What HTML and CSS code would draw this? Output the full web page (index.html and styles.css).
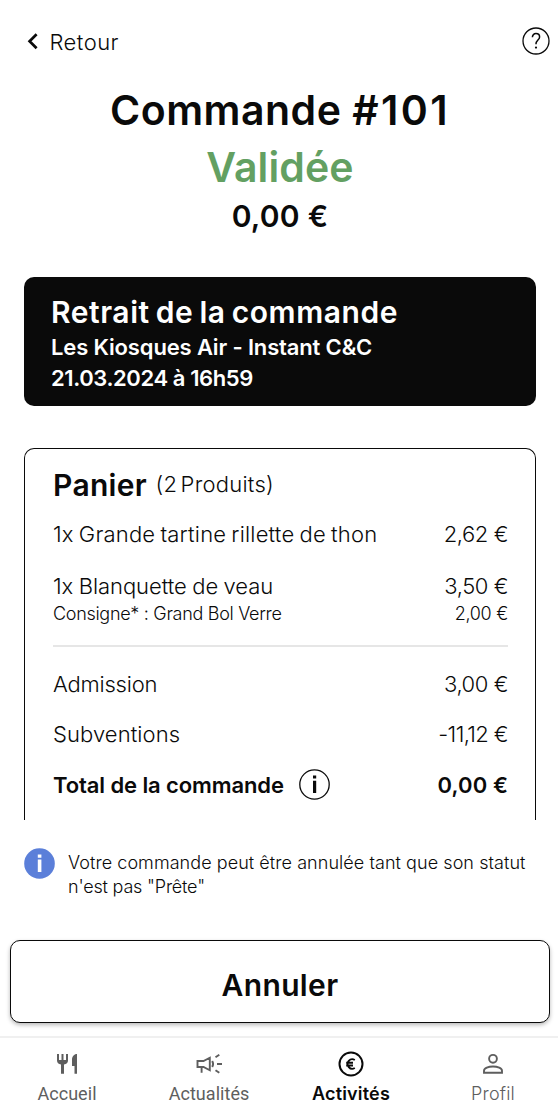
FILE: index.html
```html
<!DOCTYPE html>
<html lang="fr">
<head>
<meta charset="utf-8">
<title>Commande #101</title>
<link rel="stylesheet" href="styles.css">
</head>
<body>
<div class="screen">
  <header class="topbar">
    <a class="back">
      <svg class="back-icon" width="12" height="18" viewBox="0 0 12 18"><path d="M9.600 2.200 2.600 9.200l7 7" fill="none" stroke="#0a0a0a" stroke-width="2.700"/></svg>
      <span>Retour</span>
    </a>
    <svg class="help" width="28" height="28" viewBox="0 0 28 28" fill="none" stroke="#0a0a0a"><circle cx="14" cy="14" r="13" stroke-width="1.300"/><path d="M10.400 10.200c0-2.100 1.500-3.600 3.600-3.600s3.600 1.400 3.600 3.300c0 2.800-3.600 3.400-3.600 6.800v.6" stroke-width="1.500"/><circle cx="14" cy="20.600" r="1.100" fill="#0a0a0a" stroke="none"/></svg>
  </header>

  <section class="summary">
    <h1 class="title">Commande <span class="number">#101</span></h1>
    <div class="status">Validée</div>
    <div class="amount">0,00 €</div>
  </section>

  <section class="pickup">
    <h2 class="pickup-title">Retrait de la commande</h2>
    <div class="pickup-line">Les Kiosques Air - Instant C&amp;C</div>
    <div class="pickup-line pickup-date">21.03.2024 à 16h59</div>
  </section>

  <section class="basket">
    <div class="basket-head"><h2 class="basket-title">Panier</h2><span class="basket-count">(2 Produits)</span></div>
    <div class="row"><span class="item">1x Grande tartine rillette de thon</span><span class="price">2,62 €</span></div>
    <div class="row row-deposit"><span class="tight">1x Blanquette de veau</span><span class="price">3,50 €</span></div>
    <div class="row-sub"><span>Consigne* : Grand Bol Verre</span><span>2,00 €</span></div>
    <hr class="divider">
    <div class="row"><span class="admission">Admission</span><span class="price">3,00 €</span></div>
    <div class="row"><span class="subsidy">Subventions</span><span class="price price-neg">-11,12 €</span></div>
    <div class="row total">
      <span class="total-label">Total de la commande
        <svg width="31" height="31" viewBox="0 0 31 31"><circle cx="15.500" cy="15.500" r="14.700" fill="none" stroke="#0a0a0a" stroke-width="1.300"/><path d="M14 6.600h3.200v3H14zM14 11.700h3.200V24H14z" fill="#0a0a0a"/></svg>
      </span>
      <span class="price-total">0,00 €</span>
    </div>
  </section>

  <section class="note">
    <svg width="31" height="31" viewBox="0 0 31 31"><circle cx="15.500" cy="15.500" r="15.300" fill="#5b7fd9"/><path d="M13.800 6.500h3.600v3.200h-3.600zM13.800 11.600h3.600V24h-3.600z" fill="#fff"/></svg>
    <p class="note-text">Votre commande peut être annulée tant que son statut<br><span class="note-end">n'est pas "Prête"</span></p>
  </section>

  <button class="cancel">Annuler</button>

  <nav class="tabs">
    <a class="tab tab-plain">
      <svg width="28" height="28" viewBox="0 0 28 28" fill="#5e5e5e"><path d="M4 4h2v6h2.500V4h2v6H13V4h2v6.500c0 2-1.500 3.700-4 4V23.800H8V14.500c-2.500-.3-4-2-4-4z"/><path d="M24 4v19.800h-2.500V16H19V9.500C19 6.500 21 4 24 4z"/></svg>
      <span>Accueil</span>
    </a>
    <a class="tab tab-plain">
      <svg width="28" height="28" viewBox="0 0 28 28" fill="none" stroke="#5e5e5e" stroke-width="1.900"><path d="M2.500 11h6l6.300-3.300v12.600l-6.300-3.300h-6zM6.600 17v5.800M17.200 11q1.800 3 0 6M20.500 7.300l3.800-2.600M22 14h5M20.500 20.200l3.800 2.600"/></svg>
      <span>Actualités</span>
    </a>
    <a class="tab tab-active">
      <svg width="28" height="28" viewBox="0 0 28 28" fill="none" stroke="#0a0a0a"><circle cx="14" cy="14" r="11.500" stroke-width="2"/><path d="M17.800 10a4.700 4.700 0 1 0 0 8M9.200 12.700H16M9.200 15.500H16" stroke-width="1.900"/></svg>
      <span>Activités</span>
    </a>
    <a class="tab">
      <svg width="28" height="28" viewBox="0 0 28 28" fill="none" stroke="#5e5e5e" stroke-width="1.900"><circle cx="14" cy="8.800" r="3.900"/><path d="M5 22.800v-2c0-2.500 4.500-4.300 9-4.300s9 1.800 9 4.300v2z"/></svg>
      <span>Profil</span>
    </a>
  </nav>
</div>
</body>
</html>
```

FILE: styles.css
```css
* { box-sizing: border-box; }

body {
  margin: 0;
  background: #fff;
  color: #0a0a0a;
  font-family: Inter, "Liberation Sans", sans-serif;
  font-weight: 300;
}

h1, h2, p { margin: 0; font-weight: 600; }
svg { display: block; flex: none; }

.screen {
  display: flex;
  flex-direction: column;
  width: 558px;
  height: 1110px;
  overflow: hidden;
}

.topbar {
  display: flex;
  justify-content: space-between;
  align-items: center;
  height: 82px;
  padding: 0 8px 0 27px;
}
.back {
  display: flex;
  align-items: center;
  gap: 10.5px;
  font-size: 22px;
  line-height: 30px;
  letter-spacing: .45px;
}
.back span { padding-top: 2px; }

.summary { padding-left: 2px; text-align: center; font-weight: 600; }
.title { font-size: 41px; line-height: 56px; letter-spacing: .5px; }
.number { letter-spacing: 2.4px; }
.status {
  margin-top: 1px;
  font-size: 41px;
  line-height: 56px;
  letter-spacing: .11px;
  color: #63a062;
}
.amount { font-size: 30px; line-height: 42px; letter-spacing: .24px; }

.pickup {
  height: 129px;
  margin: 40px 22px 0 24px;
  padding: 15px 27px 0;
  border-radius: 10px;
  background: #0a0a0a;
  color: #fff;
  font-weight: 600;
}
.pickup-title { font-size: 30px; line-height: 40px; letter-spacing: .55px; word-spacing: -2px; }
.pickup-line { font-size: 22px; line-height: 30px; letter-spacing: -.15px; }
.pickup-date { margin-top: 1px; letter-spacing: -.4px; }

.basket {
  height: 373px;
  margin: 42px 22px 0 24px;
  padding: 16px 27px 0 28px;
  border: 1.5px solid #0a0a0a;
  border-bottom: 0;
  border-radius: 10px 10px 0 0;
  font-size: 22px;
}
.basket-head { display: flex; align-items: baseline; gap: 8.5px; }
.basket-title { font-size: 30px; line-height: 40px; letter-spacing: .3px; }
.basket-count { position: relative; top: -4px; letter-spacing: .25px; word-spacing: -3px; }

.row, .row-sub { display: flex; justify-content: space-between; }
.row { line-height: 30px; margin-top: 21px; }
.basket-head + .row { margin-top: 14px; }
.row-deposit { margin-top: 22px; }
.row-sub { margin-top: 1px; font-size: 18px; line-height: 24px; letter-spacing: -.3px; }
.item { letter-spacing: .2px; word-spacing: -1.3px; }
.tight { letter-spacing: -.05px; word-spacing: -.7px; }
.price { letter-spacing: -.45px; }
.price-neg { letter-spacing: -.63px; }
.admission { letter-spacing: -.21px; }
.subsidy { letter-spacing: .08px; }
.divider { height: 2px; margin: 19px 0 0; border: 0; background: #e6e6e6; }
.divider + .row { margin-top: 22px; }
.divider + .row + .row { margin-top: 20px; }
.total { font-weight: 600; }
.total-label { display: flex; align-items: center; gap: 15px; height: 30px; letter-spacing: -.1px; }
.price-total { letter-spacing: .1px; }

.note {
  display: flex;
  gap: 13.5px;
  margin: 27px 0 0 23.5px;
}
.note svg { margin-top: 1px; }
.note-text {
  padding-top: 4px;
  font-size: 18px;
  font-weight: 300;
  line-height: 24px;
  letter-spacing: .06px;
}
.note-end { letter-spacing: -.2px; }

.cancel {
  height: 83px;
  margin: 41px 8px 0 10px;
  padding: 7px 0 0;
  border: 1.5px solid #0a0a0a;
  border-radius: 10px;
  background: #fff;
  box-shadow: 0 2px 4px rgba(0, 0, 0, .28);
  color: #0a0a0a;
  font: 600 30px/40px Inter, "Liberation Sans", sans-serif;
  letter-spacing: .35px;
}

.tabs {
  display: grid;
  grid-template-columns: repeat(4, 142px);
  height: 74px;
  margin-top: 13px;
  padding-left: 2px;
  border-top: 2px solid #f0f0f0;
  justify-content: center;
  color: #5e5e5e;
  font-size: 18px;
  line-height: 24px;
}
.tab {
  display: flex;
  flex-direction: column;
  align-items: center;
  gap: 4px;
  padding-top: 12px;
  letter-spacing: .19px;
}
.tab-plain { font-family: Roboto, sans-serif; font-weight: 400; letter-spacing: .05px; }
.tab-active { color: #0a0a0a; font-weight: 600; }
```
